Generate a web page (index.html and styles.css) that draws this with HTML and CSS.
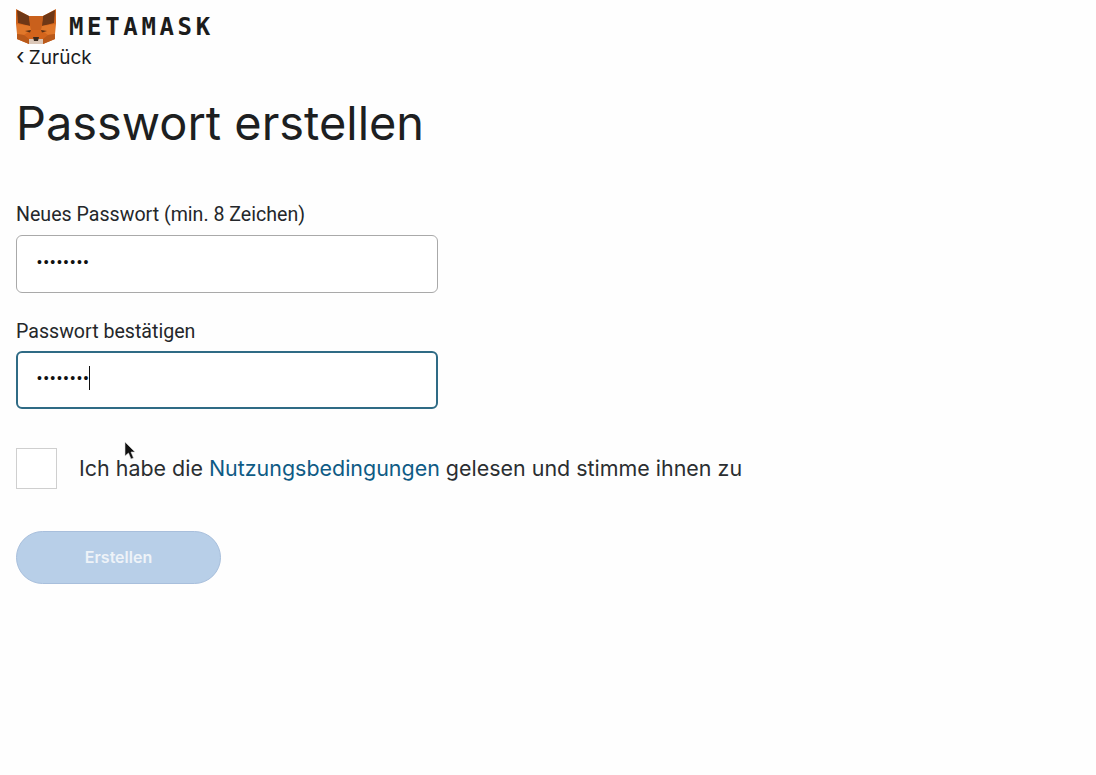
FILE: index.html
```html
<!DOCTYPE html>
<html lang="de">
<head>
<meta charset="utf-8">
<title>MetaMask</title>
<link rel="stylesheet" href="styles.css">
</head>
<body>
<main class="page">
  <header class="brand">
    <svg class="fox" viewBox="0 0 40 36" width="40" height="36" aria-hidden="true">
      <polygon points="0,1 13,8 27,8 40,1 40,15 39,26 39,31 27,36 13,36 1,31 1,26 0,15" fill="#d3641c"/>
      <polygon points="1,2 13,8 14,18 2,15" fill="#6e3716"/>
      <polygon points="39,2 27,8 26,18 38,15" fill="#6e3716"/>
      <polygon points="13,8 27,8 25,22 15,22" fill="#c9601c"/>
      <polygon points="1,16 14,18 15,22 8,27 1,26" fill="#e0772a"/>
      <polygon points="39,16 26,18 25,22 32,27 39,26" fill="#e0772a"/>
      <polygon points="9,23 15,22 14,24.5" fill="#5a2f14"/>
      <polygon points="31,23 25,22 26,24.5" fill="#5a2f14"/>
      <polygon points="1,26 8,27 13,31 13,36 1,31" fill="#b9591a"/>
      <polygon points="39,26 32,27 27,31 27,36 39,31" fill="#b9591a"/>
      <polygon points="13,31 27,31 27,36 13,36" fill="#dbc7b8"/>
      <polygon points="17,29 23,29 22,33 18,33" fill="#3a2a1e"/>
    </svg>
    <span class="wordmark">METAMASK</span>
  </header>
  <a class="back" href="#"><span class="chev">‹</span> Zurück</a>
  <h1 class="title">Passwort erstellen</h1>
  <form class="form">
    <label class="label label-first" for="pw1">Neues Passwort (min. 8 Zeichen)</label>
    <div class="field"><span class="dots">••••••••</span></div>
    <label class="label label-second" for="pw2">Passwort bestätigen</label>
    <div class="field field-focus"><span class="dots">••••••••</span><span class="caret"></span></div>
    <div class="terms">
      <span class="box"></span>
      <span class="terms-text">Ich habe die <a href="#">Nutzungsbedingungen</a> gelesen und stimme ihnen zu</span>
      <svg class="cursor" viewBox="0 0 12 20" width="12" height="20" aria-hidden="true">
        <path d="M1 1 L1 15 L4.5 12 L7 18 L9.5 17 L7 11 L11 11 Z" fill="#111" stroke="#ddd" stroke-width=".6"/>
      </svg>
    </div>
    <div class="btn">Erstellen</div>
  </form>
</main>
</body>
</html>
```
FILE: styles.css
```css
* { box-sizing: border-box; }
html, body { margin: 0; background: #fefefe; }
body { width: 1096px; height: 775px; overflow: hidden; font-family: "Inter", "Liberation Sans", sans-serif; color: #24272a; }
.page { padding: 8px 0 0 16px; display: flex; flex-direction: column; align-items: flex-start; }
.brand { display: flex; align-items: center; height: 36px; gap: 13px; }
.fox { display: block; }
.wordmark { font-family: "DejaVu Sans Mono", monospace; font-size: 24px; font-weight: 700; letter-spacing: 3.65px; color: #1c1c1c; padding-top: 1px; }
.back { font-size: 19px; line-height: 26px; color: #1c1c1c; text-decoration: none; margin: 1px 0 0 0; word-spacing: -1px; }
.chev { font-size: 22px; line-height: 20px; }
.title { font-size: 46.9px; font-weight: 400; line-height: 60px; margin: 22px 0 0 0; color: #1d1f21; }
.form { display: flex; flex-direction: column; align-items: flex-start; }
.label { font-family: "Roboto", sans-serif; font-size: 19.6px; line-height: 24px; color: #24272a; }
.label-first { margin-top: 50px; }
.label-second { margin-top: 27px; }
.field { width: 422px; height: 58px; margin-top: 8px; border: 1px solid #a9a9a9; border-radius: 6px; background: #fff; display: flex; align-items: center; padding: 0 0 5px 20px; }
.field-focus { border: 2px solid #2f6b85; margin-top: 7px; padding-left: 19px; padding-bottom: 4px; }
.dots { font-family: "Liberation Sans", sans-serif; font-size: 14px; letter-spacing: 1.75px; color: #111; }
.caret { width: 1px; height: 24px; background: #111; margin-left: -1px; }
.terms { position: relative; display: flex; align-items: center; margin-top: 38px; height: 42px; }
.box { width: 41px; height: 41px; border: 1px solid #cfcfcf; background: #fff; }
.terms-text { margin-left: 22px; font-size: 21.45px; color: #2b2e31; }
.terms-text a { color: #0f5b85; text-decoration: none; }
.cursor { position: absolute; left: 108px; top: -6px; }
.btn { width: 205px; height: 53px; margin-top: 42px; border-radius: 27px; border: 1px solid #a8bfdc; background: #b8cfe8; color: #eef3f8; font-weight: 600; font-size: 16px; display: flex; align-items: center; justify-content: center; padding-bottom: 1px; }
```
